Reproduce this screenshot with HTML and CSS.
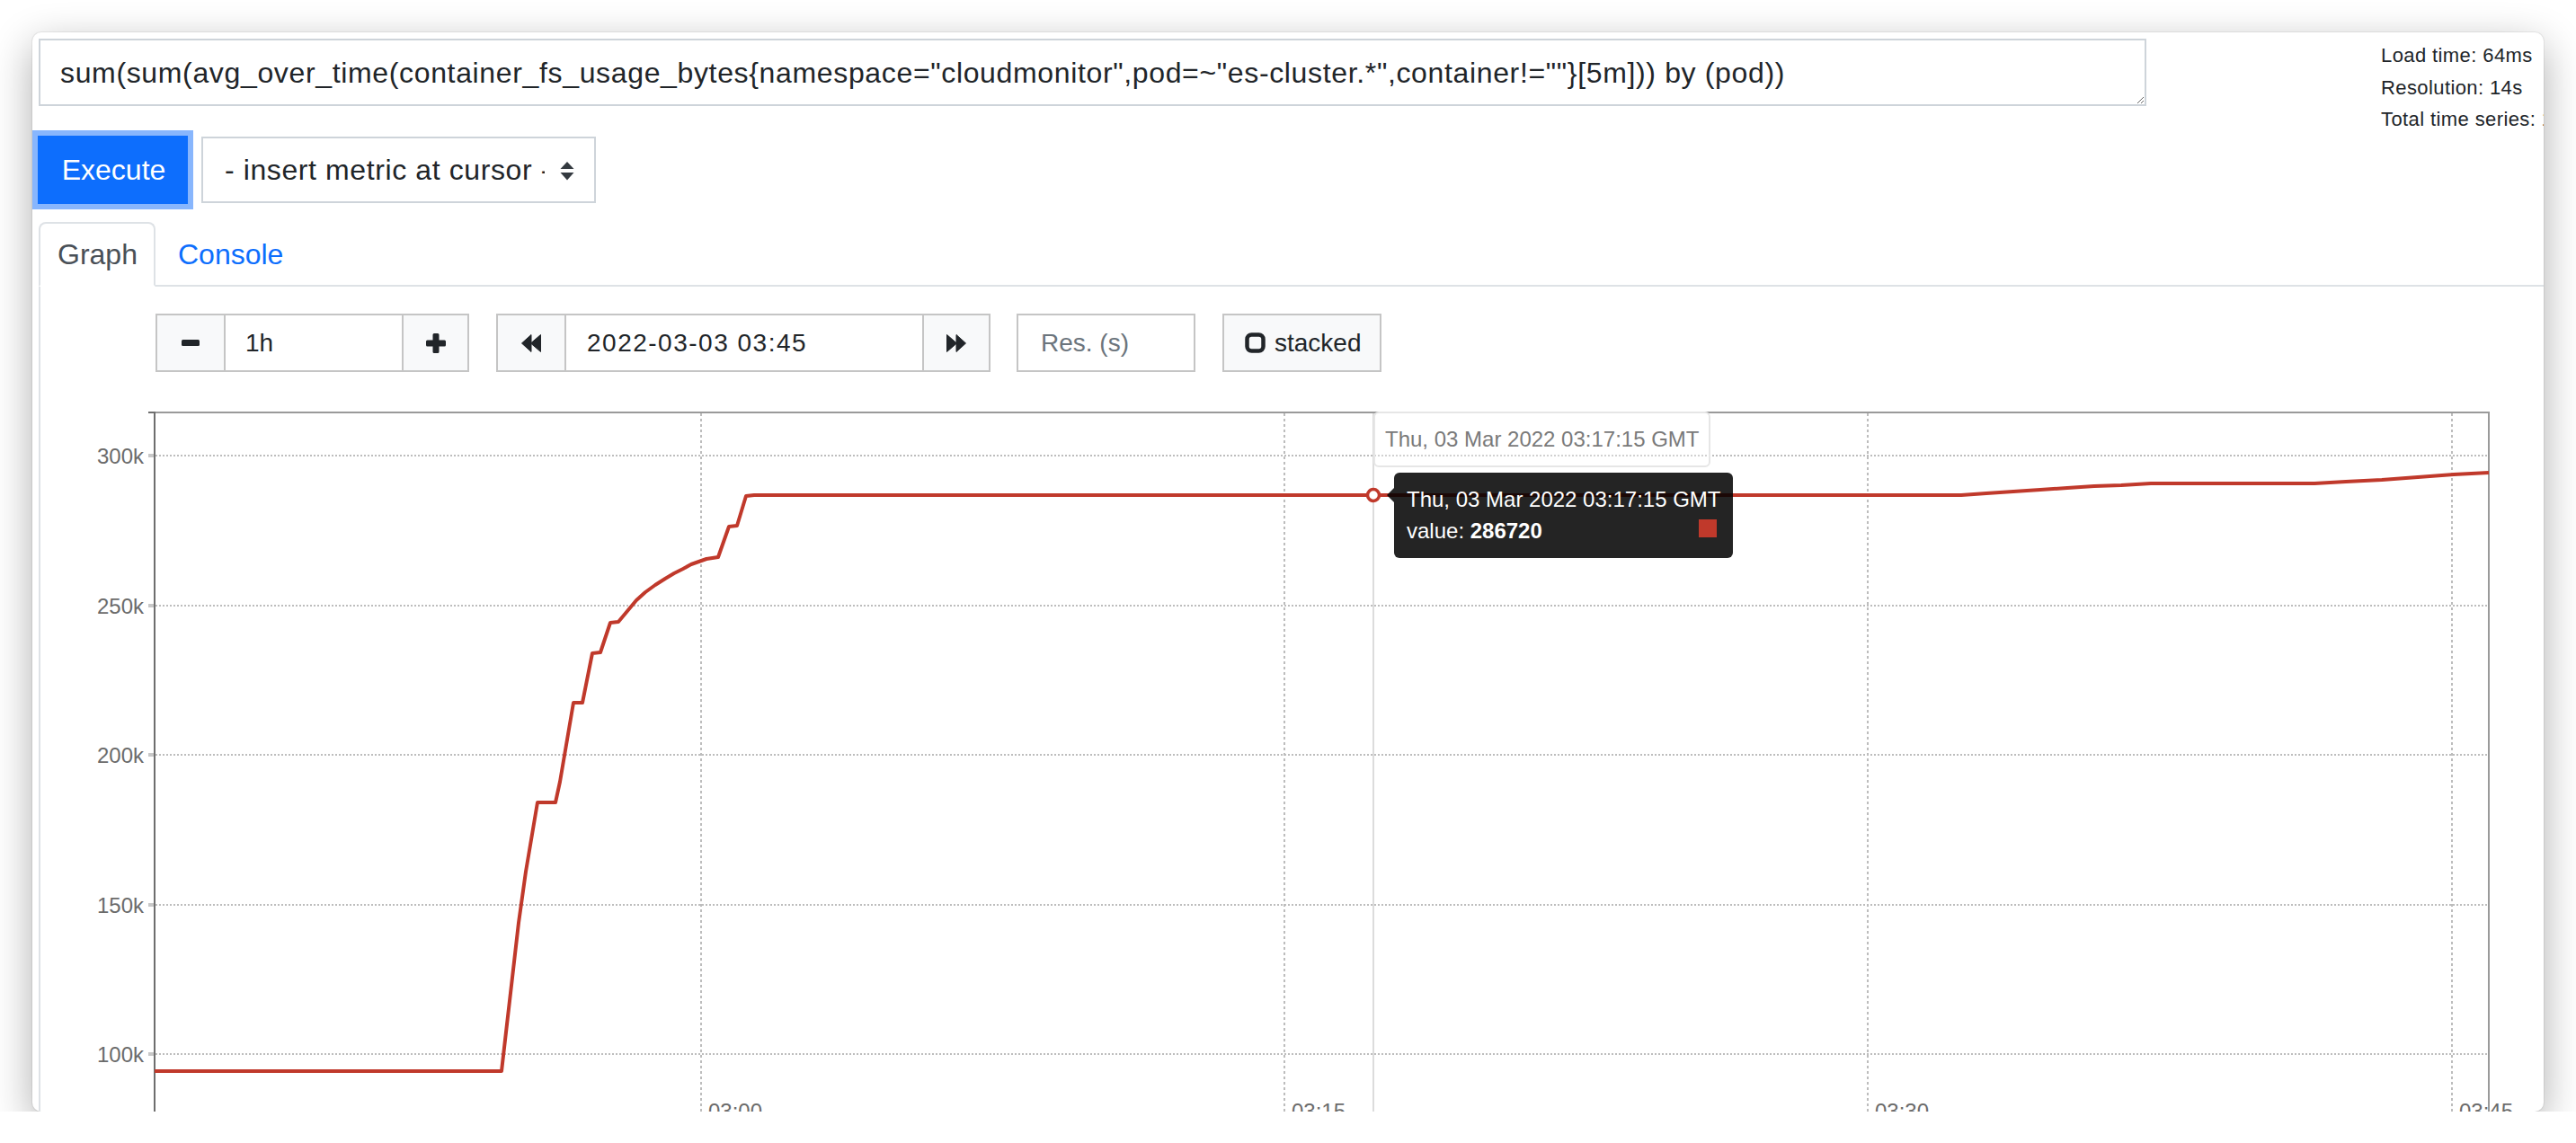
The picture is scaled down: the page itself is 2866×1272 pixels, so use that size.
FILE: index.html
```html
<!DOCTYPE html>
<html lang="en">
<head>
<meta charset="utf-8">
<title>Prometheus Graph</title>
<link rel="stylesheet" href="styles.css">
</head>
<body>
<div class="window">
  <div class="page">
    <div class="query-row">
      <textarea class="expr" wrap="off" spellcheck="false">sum(sum(avg_over_time(container_fs_usage_bytes{namespace="cloudmonitor",pod=~"es-cluster.*",container!=""}[5m])) by (pod))</textarea>
      <div class="stats">
        <div>Load time: 64ms</div>
        <div>Resolution: 14s</div>
        <div>Total time series: 1</div>
      </div>
    </div>

    <div class="exec-row">
      <button class="btn-execute">Execute</button>
      <div class="metric-select">
        <span class="metric-text">- insert metric at cursor -</span>
        <svg class="select-arrows" width="16" height="21" viewBox="0 0 16 21">
          <path d="M8 0 L15.5 8 L0.5 8 Z" fill="#343a40"/>
          <path d="M0.5 12 L15.5 12 L8 20.5 Z" fill="#343a40"/>
        </svg>
      </div>
    </div>

    <div class="tabs">
      <div class="tab active">Graph</div>
      <div class="tab link">Console</div>
    </div>

    <div class="tab-content">
      <div class="toolbar">
        <div class="group">
          <div class="gbtn w74">
            <svg width="20" height="7" viewBox="0 0 20 7"><rect x="0" y="0" width="20" height="7" rx="1.5" fill="#212529"/></svg>
          </div>
          <div class="ginput w196">1h</div>
          <div class="gbtn w71">
            <svg width="22" height="22" viewBox="0 0 22 22"><path d="M7.5 1.5 a1.5 1.5 0 0 1 1.5 -1.5 h4 a1.5 1.5 0 0 1 1.5 1.5 V7.5 H20.5 a1.5 1.5 0 0 1 1.5 1.5 v4 a1.5 1.5 0 0 1 -1.5 1.5 H14.5 V20.5 a1.5 1.5 0 0 1 -1.5 1.5 h-4 a1.5 1.5 0 0 1 -1.5 -1.5 V14.5 H1.5 a1.5 1.5 0 0 1 -1.5 -1.5 v-4 a1.5 1.5 0 0 1 1.5 -1.5 H7.5 Z" fill="#212529"/></svg>
          </div>
        </div>
        <div class="group">
          <div class="gbtn w74">
            <svg width="22" height="20" viewBox="0 0 22 20"><path d="M0.5 10 L11 0.5 V19.5 Z M10.5 10 L21.5 0.5 V19.5 Z" fill="#212529" stroke="#212529" stroke-width="1" stroke-linejoin="round"/></svg>
          </div>
          <div class="ginput w396 date">2022-03-03 03:45</div>
          <div class="gbtn w72">
            <svg width="22" height="20" viewBox="0 0 22 20"><path d="M21.5 10 L11 0.5 V19.5 Z M11.5 10 L0.5 0.5 V19.5 Z" fill="#212529" stroke="#212529" stroke-width="1" stroke-linejoin="round"/></svg>
          </div>
        </div>
        <div class="res-input">Res. (s)</div>
        <div class="stacked-btn">
          <svg width="23" height="23" viewBox="0 0 23 23"><rect x="2.5" y="2.5" width="18" height="18" rx="5" fill="none" stroke="#212529" stroke-width="4.5"/></svg>
          <span>stacked</span>
        </div>
      </div>

      <div class="chart">
        <svg class="chart-svg" width="2785" height="820" viewBox="45 430 2785 820">
          <g stroke="#bdbdbd" stroke-width="2" stroke-dasharray="2 2">
            <line x1="173" y1="507" x2="2768" y2="507"/>
            <line x1="173" y1="674" x2="2768" y2="674"/>
            <line x1="173" y1="840" x2="2768" y2="840"/>
            <line x1="173" y1="1007" x2="2768" y2="1007"/>
            <line x1="173" y1="1173" x2="2768" y2="1173"/>
          </g>
          <g stroke="#bdbdbd" stroke-width="2" stroke-dasharray="3 3">
            <line x1="780" y1="460" x2="780" y2="1250"/>
            <line x1="1429" y1="460" x2="1429" y2="1250"/>
            <line x1="2078" y1="460" x2="2078" y2="1250"/>
            <line x1="2728" y1="460" x2="2728" y2="1250"/>
          </g>
          <line x1="1528" y1="460" x2="1528" y2="1250" stroke="#dcdcdc" stroke-width="2"/>
          <line x1="171" y1="459" x2="2770" y2="459" stroke="#9a9a9a" stroke-width="2"/>
          <line x1="2769" y1="458" x2="2769" y2="1250" stroke="#9a9a9a" stroke-width="2"/>
          <line x1="172" y1="458" x2="172" y2="1250" stroke="#6e6e6e" stroke-width="2"/>
          <line x1="165" y1="459" x2="172" y2="459" stroke="#6e6e6e" stroke-width="2"/>
          <g stroke="#c8c8c8" stroke-width="4">
            <line x1="165" y1="507" x2="171" y2="507"/>
            <line x1="165" y1="674" x2="171" y2="674"/>
            <line x1="165" y1="840" x2="171" y2="840"/>
            <line x1="165" y1="1007" x2="171" y2="1007"/>
            <line x1="165" y1="1173" x2="171" y2="1173"/>
          </g>
          <g class="axis-label" text-anchor="end">
            <text x="160" y="516">300k</text>
            <text x="160" y="683">250k</text>
            <text x="160" y="849">200k</text>
            <text x="160" y="1016">150k</text>
            <text x="160" y="1182">100k</text>
          </g>
          <g class="axis-label">
            <text x="788" y="1245">03:00</text>
            <text x="1437" y="1245">03:15</text>
            <text x="2086" y="1245">03:30</text>
            <text x="2736" y="1245">03:45</text>
          </g>
          <path class="series" d="M172 1192 L558 1192 L577 1027 L585 970 L598 893 L618 893 L623 870 L638 782 L648 782 L659 727 L668 726 L679 693 L688 692 L698 680 L708 668 L718 659 L729 651 L740 644 L750 638 L760 633 L769 628 L786 622 L799 620 L811 586 L820 585 L830 552 L839 551 L2182 551 L2210 549 L2240 547 L2270 545 L2300 543 L2330 541 L2360 540 L2393 538 L2575 538 L2610 536 L2650 534 L2690 531 L2730 528 L2769 526"/>
          <circle cx="1528" cy="551" r="6.5" fill="#fff" stroke="#c0392b" stroke-width="3.5"/>
        </svg>
        <div class="hover-date">Thu, 03 Mar 2022 03:17:15 GMT</div>
        <div class="tooltip">
          <div>Thu, 03 Mar 2022 03:17:15 GMT</div>
          <div>value: <b>286720</b></div>
          <span class="swatch"></span>
        </div>
      </div>
    </div>
  </div>
</div>
</body>
</html>
```

FILE: styles.css
```css
* { box-sizing: border-box; }

html, body {
  margin: 0;
  padding: 0;
  background: #ffffff;
}

body {
  font-family: "Liberation Sans", Arial, sans-serif;
  color: #212529;
  padding-top: 36px;
  overflow: hidden;
}

.window {
  margin: 0 36px;
  width: 2794px;
  height: 1201px;
  background: #ffffff;
  border-radius: 10px;
  overflow: hidden;
  box-shadow: 0 14px 46px rgba(0, 0, 0, 0.32), 0 0 0 1px rgba(0, 0, 0, 0.06);
}

.page {
  padding: 7px 0 0 7px;
  width: 3000px;
}

/* ---------- query row ---------- */
.query-row {
  display: flex;
  align-items: flex-start;
  height: 75px;
}

.expr {
  display: block;
  flex: none;
  width: 2345px;
  height: 75px;
  border: 2px solid #ced4da;
  border-radius: 0;
  padding: 12px 22px;
  font-family: "Liberation Sans", Arial, sans-serif;
  font-size: 32px;
  line-height: 48px;
  letter-spacing: 0.65px;
  color: #212529;
  overflow: hidden;
  resize: both;
  white-space: pre;
  outline: none;
}

.stats {
  margin-left: 261px;
  margin-top: 1px;
  font-size: 22px;
  line-height: 35.5px;
  letter-spacing: 0.4px;
  white-space: nowrap;
  color: #212529;
}

/* ---------- execute row ---------- */
.exec-row {
  display: flex;
  align-items: center;
  margin-top: 33px;
}

.btn-execute {
  width: 167px;
  height: 76px;
  margin-left: -1px;
  background: #0d6efd;
  border: none;
  border-radius: 0;
  color: #ffffff;
  font-family: "Liberation Sans", Arial, sans-serif;
  font-size: 32px;
  padding: 0 0 0 2px;
  box-shadow: 0 0 0 6px #88b6fd;
}

.metric-select {
  margin-left: 15px;
  width: 439px;
  height: 74px;
  border: 2px solid #ced4da;
  display: flex;
  align-items: center;
  padding-left: 24px;
  font-size: 32px;
  color: #212529;
}

.metric-text {
  display: block;
  width: 356px;
  overflow: hidden;
  white-space: nowrap;
  letter-spacing: 0.6px;
}

.select-arrows {
  margin-left: 17px;
  margin-top: 2px;
}

/* ---------- tabs ---------- */
.tabs {
  display: flex;
  height: 72px;
  margin-top: 20px;
  border-bottom: 2px solid #dee2e6;
}

.tab {
  height: 72px;
  font-size: 32px;
  display: flex;
  align-items: center;
  margin-bottom: -2px;
}

.tab.active {
  border: 2px solid #dee2e6;
  border-bottom-color: #ffffff;
  border-radius: 8px 8px 0 0;
  background: #ffffff;
  color: #495057;
  padding: 0 19px;
  width: 130px;
}

.tab.link {
  color: #0d6efd;
  padding: 0 25px;
}

/* ---------- tab content ---------- */
.tab-content {
  border-left: 2px solid #dee2e6;
  padding-top: 30px;
  height: 1000px;
}

.toolbar {
  display: flex;
  align-items: stretch;
  height: 65px;
  margin-left: 128px;
}

.group {
  display: flex;
  border: 2px solid #c5c5c5;
  margin-right: 30px;
}

.gbtn {
  background: #f8f9fa;
  display: flex;
  align-items: center;
  justify-content: center;
}

.gbtn + .ginput,
.ginput + .gbtn {
  border-left: 2px solid #c5c5c5;
}

.ginput {
  background: #ffffff;
  display: flex;
  align-items: center;
  padding-left: 22px;
  font-size: 28px;
  color: #212529;
}

.ginput.date {
  letter-spacing: 1.5px;
  padding-left: 23px;
}

.w74 { width: 74px; }
.w71 { width: 73px; }
.w72 { width: 74px; }
.w196 { width: 198px; }
.w396 { width: 398px; }

.res-input {
  width: 199px;
  border: 2px solid #c5c5c5;
  display: flex;
  align-items: center;
  padding-left: 25px;
  font-size: 28px;
  color: #6c757d;
  margin-left: -1px;
  margin-right: 30px;
}

.stacked-btn {
  width: 177px;
  border: 2px solid #c5c5c5;
  background: #f8f9fa;
  display: flex;
  align-items: center;
  padding-left: 23px;
  font-size: 28px;
  color: #212529;
}

.stacked-btn span {
  margin-left: 10px;
}

/* ---------- chart ---------- */
.chart {
  position: relative;
  margin-top: 16px;
  width: 2785px;
  height: 820px;
}

.chart-svg {
  display: block;
}

.axis-label text {
  font-family: "Liberation Sans", Arial, sans-serif;
  font-size: 24px;
  fill: #6b6b6b;
}

.series {
  fill: none;
  stroke: #c0392b;
  stroke-width: 4;
  stroke-linejoin: round;
}

.hover-date {
  position: absolute;
  left: 1483px;
  top: 28px;
  width: 375px;
  height: 62px;
  border: 2px solid #e6e6e6;
  border-radius: 6px;
  background: rgba(255, 255, 255, 0.3);
  padding-left: 11px;
  font-size: 24px;
  line-height: 58px;
  color: #7a7a7a;
  white-space: nowrap;
}

.tooltip {
  position: absolute;
  left: 1506px;
  top: 96px;
  width: 377px;
  height: 95px;
  background: rgba(0, 0, 0, 0.86);
  border-radius: 6px;
  padding: 12px 0 0 14px;
  font-size: 24px;
  line-height: 35px;
  color: #ffffff;
  white-space: nowrap;
}

.tooltip::before {
  content: "";
  position: absolute;
  left: -8px;
  top: 17px;
  border-top: 8px solid transparent;
  border-bottom: 8px solid transparent;
  border-right: 8px solid rgba(0, 0, 0, 0.86);
}

.swatch {
  position: absolute;
  right: 18px;
  top: 52px;
  width: 20px;
  height: 20px;
  background: #c0392b;
}
```
